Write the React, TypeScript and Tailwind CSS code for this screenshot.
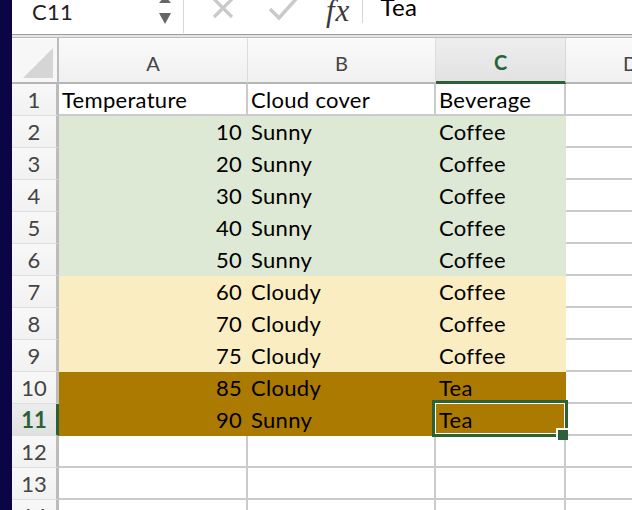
import React from 'react';

const FONT = "font-['Lato','Liberation_Sans',sans-serif]";

type Row = { n: number; a?: string; b?: string; c?: string; fill?: string };

const rows: Row[] = [
  { n: 1, a: 'Temperature', b: 'Cloud cover', c: 'Beverage' },
  { n: 2, a: '10', b: 'Sunny', c: 'Coffee', fill: 'green' },
  { n: 3, a: '20', b: 'Sunny', c: 'Coffee', fill: 'green' },
  { n: 4, a: '30', b: 'Sunny', c: 'Coffee', fill: 'green' },
  { n: 5, a: '40', b: 'Sunny', c: 'Coffee', fill: 'green' },
  { n: 6, a: '50', b: 'Sunny', c: 'Coffee', fill: 'green' },
  { n: 7, a: '60', b: 'Cloudy', c: 'Coffee', fill: 'yellow' },
  { n: 8, a: '70', b: 'Cloudy', c: 'Coffee', fill: 'yellow' },
  { n: 9, a: '75', b: 'Cloudy', c: 'Coffee', fill: 'yellow' },
  { n: 10, a: '85', b: 'Cloudy', c: 'Tea', fill: 'brown' },
  { n: 11, a: '90', b: 'Sunny', c: 'Tea', fill: 'brown' },
  { n: 12 },
  { n: 13 },
  { n: 14 },
];

const fillClass: Record<string, string> = {
  green: 'bg-[#dde9d4] border-[#dde9d4]',
  yellow: 'bg-[#faedc2] border-[#faedc2]',
  brown: 'bg-[#ab7a00] border-[#ab7a00]',
};

function FormulaBar() {
  return (
    <div className="flex h-[34px] shrink-0 items-start bg-white">
      <div className="flex h-[33px] w-[172px] shrink-0 items-start border-r border-[#d6d6d6]">
        <span className={`${FONT} mt-[-1px] pl-[20px] text-[22px] tracking-[0.3px] leading-[26px] text-[#222]`}>C11</span>
        <div className="ml-auto mr-[11px] flex flex-col items-center">
          <svg width="14" height="26" viewBox="0 0 14 26">
            <path d="M1 3 L13 3 L7 -4 Z" fill="#666" />
            <path d="M1 13 L13 13 L7 24 Z" fill="#666" />
          </svg>
        </div>
      </div>
      <svg className="ml-[28px] mt-[-3px]" width="22" height="22" viewBox="0 0 22 22">
        <path d="M2 2 L20 20 M20 2 L2 20" stroke="#c9c9c9" strokeWidth="3.2" />
      </svg>
      <svg className="ml-[34px] mt-[-3px]" width="30" height="24" viewBox="0 0 30 24">
        <path d="M2 12 L11 21 L28 2" stroke="#c9c9c9" strokeWidth="3.4" fill="none" />
      </svg>
      <span className="ml-[28px] mt-[-3px] font-['Liberation_Serif',serif] text-[31px] italic leading-[28px] tracking-[1px] text-[#3a3a3a]">
        fx
      </span>
      <div className="ml-[12px] h-[23px] w-px bg-[#d6d6d6]" />
      <span className={`${FONT} ml-[17px] mt-[-7px] text-[24px] tracking-[0.3px] leading-[28px] text-black`}>Tea</span>
    </div>
  );
}

function ColHeader({ label, w, active }: { label: string; w: string; active?: boolean }) {
  return (
    <div
      className={`${w} flex shrink-0 items-center justify-center border-r ${
        active
          ? 'border-b-[3px] border-r-[#d8d8d8] border-b-[#2a6136] bg-gradient-to-b from-[#eeeeee] to-[#e2e2e2] font-bold text-[#2a6136]'
          : 'border-b-2 border-r-[#dcdcdc] border-b-[#b5b5b5] bg-gradient-to-b from-[#fafafa] to-[#f0f0f0] text-[#444]'
      } ${FONT} text-[20px]`}
    >
      <span className="mt-[5px]">{label}</span>
    </div>
  );
}

function Cell({
  w,
  fill,
  right,
  children,
  selected,
}: {
  w: string;
  fill?: string;
  right?: boolean;
  children?: React.ReactNode;
  selected?: boolean;
}) {
  const colors = fill ? fillClass[fill] : 'bg-white border-[#cbcbcb]';
  return (
    <div
      className={`${w} relative flex h-full shrink-0 items-end border-b-2 border-r-2 ${colors} ${
        right ? 'justify-end pr-[4px]' : 'pl-[3px]'
      }`}
    >
      <span className={`${FONT} pb-[1px] text-[22px] tracking-[0.3px] leading-[26px] text-black`}>{children}</span>
      {selected && (
        <div className="absolute left-[-4px] top-[-4px] z-10 h-[37px] w-[136px] border-3 border-solid border-[#2a6136]">
          <div className="h-full w-full border border-solid border-white" />
          <div className="absolute left-[121px] top-[25px] h-[12px] w-[12px] border-l-2 border-t-2 border-solid border-white bg-[#2a6136]" />
        </div>
      )}
    </div>
  );
}

export default function App() {
  return (
    <div className="flex h-[510px] w-[632px] overflow-hidden bg-white">
      <div className="w-[12px] shrink-0 bg-[#0b0447]" />
      <div className="flex min-w-0 flex-1 flex-col">
        <FormulaBar />
        <div className="h-[4px] shrink-0 border-b border-t border-b-[#bdbdbd] border-t-[#9c9c9c] bg-[#e4e4e4]" />
        <div className="flex h-[46px] shrink-0">
          <div className="flex w-[47px] shrink-0 items-end justify-end border-b-2 border-r-2 border-b-[#b5b5b5] border-r-[#bcbcbc] bg-[#f7f7f7] pb-[4px] pr-[4px]">
            <svg width="30" height="30" viewBox="0 0 30 30">
              <path d="M0 30 L30 0 L30 30 Z" fill="#d5d5d5" />
            </svg>
          </div>
          <ColHeader label="A" w="w-[189px]" />
          <ColHeader label="B" w="w-[188px]" />
          <ColHeader label="C" w="w-[130px]" active />
          <ColHeader label="D" w="w-[130px]" />
        </div>
        {rows.map((r) => {
          const sel = r.n === 11;
          return (
            <div key={r.n} className="flex h-[32px] shrink-0">
              <div
                className={`flex w-[47px] shrink-0 items-end justify-center border-b border-r-[3px] border-b-[#dedede] pb-[1px] ${
                  sel
                    ? 'border-r-[#2a6136] bg-gradient-to-b from-[#ececec] to-[#e0e0e0] font-bold text-[#2a6136]'
                    : 'border-r-[#bcbcbc] bg-gradient-to-b from-[#f8f8f8] to-[#f1f1f1] text-[#444]'
                } ${FONT} text-[22px] leading-[28px]`}
              >
                {r.n}
              </div>
              <Cell w="w-[189px]" fill={r.fill} right={r.n > 1}>
                {r.a}
              </Cell>
              <Cell w="w-[188px]" fill={r.fill}>
                {r.b}
              </Cell>
              <Cell w="w-[130px]" fill={r.fill} selected={sel}>
                {r.c}
              </Cell>
              <Cell w="w-[130px]" />
            </div>
          );
        })}
      </div>
    </div>
  );
}
